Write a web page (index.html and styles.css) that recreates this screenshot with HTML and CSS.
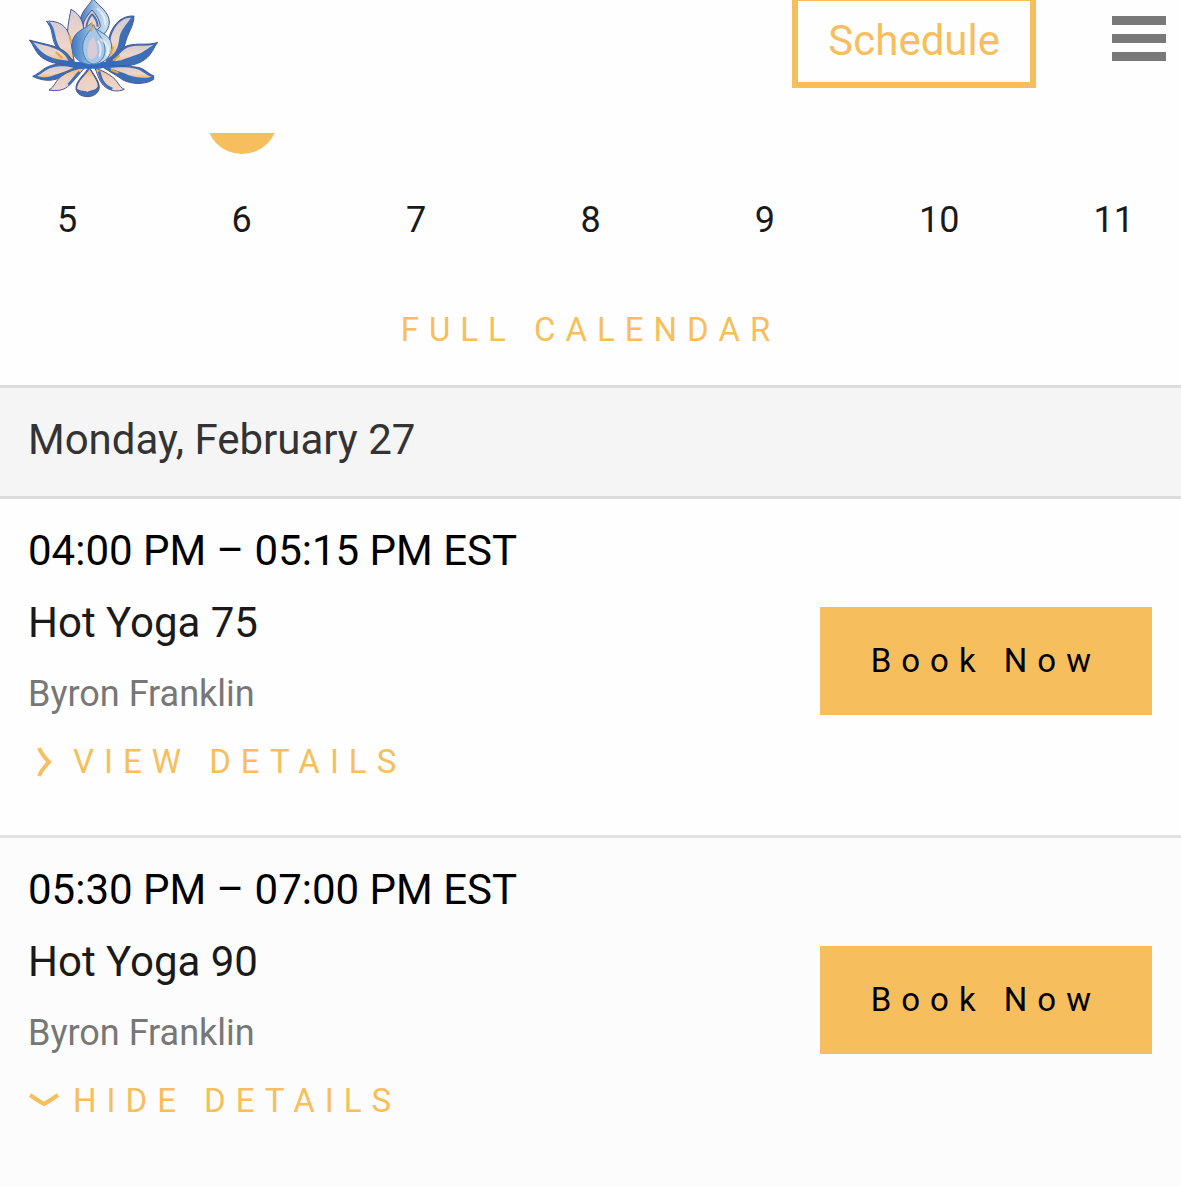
FILE: index.html
```html
<!DOCTYPE html>
<html lang="en">
<head>
  <meta charset="UTF-8">
  <meta name="viewport" content="width=device-width, initial-scale=1.0">
  <title>Class Schedule</title>
  <link rel="stylesheet" href="styles.css">
</head>
<body>
  <!-- Header -->
  <header class="header">
    <a href="#" class="logo" aria-label="Home">
      <svg width="132" height="98" viewBox="43 0 396 294">
        <defs>
          <linearGradient id="petal" x1="0" y1="0" x2="0" y2="1">
            <stop offset="0" stop-color="#d3cbd4"/>
            <stop offset="0.6" stop-color="#efd6c8"/>
            <stop offset="1" stop-color="#f0bd7c"/>
          </linearGradient>
          <linearGradient id="front" x1="0" y1="0" x2="0" y2="1">
            <stop offset="0" stop-color="#f3b45c"/>
            <stop offset="0.4" stop-color="#efd0bc"/>
            <stop offset="1" stop-color="#e9d6d0"/>
          </linearGradient>
          <linearGradient id="bud" x1="0" y1="0" x2="1" y2="0">
            <stop offset="0" stop-color="#3f78c4"/>
            <stop offset="0.5" stop-color="#9dc1e2"/>
            <stop offset="1" stop-color="#d5e5ec"/>
          </linearGradient>
        </defs>
        <g stroke="#4a5590" stroke-width="3" stroke-linejoin="round">
          <!-- back petals -->
          <path fill="url(#bud)" d="M238 -4C222 22 200 36 198 70C198 96 214 112 236 118C262 114 286 96 287 66C286 36 258 20 238 -4Z"/>
          <path fill="url(#petal)" d="M235 30C222 46 208 60 208 82L236 104L260 80C258 60 248 44 235 30Z"/>
          <path fill="none" stroke="#4473b8" stroke-width="6" d="M235 42C226 54 220 66 218 80M235 42C246 54 252 66 252 80"/>
          <path fill="url(#petal)" d="M172 28C166 60 156 96 166 132L184 154L210 84C206 56 192 38 172 28Z"/>
          <path fill="url(#petal)" d="M98 64C118 82 112 108 124 134C136 160 160 178 182 188L172 126C166 92 150 60 98 64Z"/>
          <path fill="none" stroke="#3d6fb9" stroke-width="8" d="M104 68C124 86 116 108 130 136C140 158 160 172 180 184"/>
          <path fill="#3d6fb9" d="M361 48C360 80 342 98 334 132C326 160 308 180 276 194L288 106C300 70 326 46 361 48Z"/>
          <path fill="url(#petal)" stroke="none" d="M352 53C338 76 318 90 316 122C312 150 300 164 284 174L292 110C304 74 326 52 352 53Z"/>
          <!-- side petals -->
          <path fill="#3d6fb9" d="M47 120C62 138 64 156 84 172C110 192 150 194 194 200L172 176C150 136 100 136 47 120Z"/>
          <path fill="url(#petal)" stroke="none" d="M58 127C72 142 78 154 98 165C116 176 140 180 164 182C146 144 104 140 58 127Z"/>
          <path fill="#3d6fb9" d="M432 127C420 142 416 162 394 178C366 200 326 200 270 200C302 176 316 138 354 134C386 130 410 136 432 127Z"/>
          <path fill="url(#petal)" stroke="none" d="M420 134C400 146 388 158 364 166C340 174 324 180 300 190C316 160 330 142 360 138C382 136 400 138 420 134Z"/>
          <path fill="#3d6fb9" d="M57 229C82 218 90 200 122 194C150 190 176 192 206 200C180 216 166 222 142 232C112 246 84 242 57 229Z"/>
          <path fill="url(#petal)" stroke="none" d="M70 228C90 218 98 204 126 200C146 198 164 198 182 202C160 214 142 218 120 226C100 234 88 233 70 228Z"/>
          <path fill="#3d6fb9" d="M420 227C402 222 398 208 372 202C340 196 302 198 262 198C290 216 308 226 328 240C356 254 398 254 420 238Z"/>
          <path fill="url(#petal)" stroke="none" d="M414 230C394 224 388 212 366 206C340 201 318 201 288 204C312 214 328 216 346 226C368 234 392 236 414 230Z"/>
          <!-- front petals -->
          <path fill="url(#front)" d="M106 270C124 260 124 242 144 228C162 214 188 206 214 202C194 226 182 240 168 254C152 272 130 274 106 270Z"/>
          <path fill="url(#front)" d="M332 268C314 260 312 240 292 228C276 216 260 210 244 204C254 230 258 248 276 262C292 274 314 276 332 268Z"/>
          <path fill="none" stroke="#3d6fb9" stroke-width="8" d="M256 214C262 240 270 258 296 267M198 216C184 228 178 242 164 254"/>
          <path fill="#3d6fb9" d="M226 200C216 222 184 242 187 268C190 284 208 290 222 290C238 290 256 280 257 262C256 240 238 222 226 200Z"/>
          <path fill="url(#front)" d="M228 204C216 226 188 244 189 266C198 276 210 272 222 277C234 270 248 274 254 258C252 240 236 222 228 204Z"/>
          <path stroke="none" fill="#3569bd" d="M128 180C158 182 180 186 228 188C270 186 300 186 322 180C304 198 278 202 258 206L228 206L198 206C166 204 144 192 128 180Z"/>
          <!-- bud -->
          <path fill="url(#bud)" stroke="#3d6fb9" d="M232 70C216 88 178 92 175 132C174 164 188 190 228 194C270 196 294 172 294 138C292 98 246 98 232 70Z"/>
          <path fill="#a9c6e4" stroke="#4c7fbd" d="M240 74C228 96 206 112 207 144C208 174 222 190 240 192C264 188 276 168 274 144C270 112 248 100 240 74Z"/>
        </g>
        <path fill="#d9ccd8" d="M238 112C222 126 218 150 224 170C232 184 246 178 250 160C252 140 246 124 238 112Z"/>
        <path fill="none" stroke="#e8a33c" stroke-width="6" stroke-linecap="round" d="M234 70L233 92M128 158L144 172M316 168L300 180M168 108L172 128M298 142L292 160M294 210L312 218"/>
        <path fill="none" stroke="#ffffff" stroke-opacity="0.6" stroke-width="6" stroke-linecap="round" d="M262 118C282 130 286 148 280 166M252 26C268 40 276 52 274 72M254 124C262 138 262 154 258 168"/>
      </svg>
    </a>
    <button class="schedule-button">Schedule</button>
    <button class="menu-button" aria-label="Menu">
      <span class="bar"></span>
      <span class="bar"></span>
      <span class="bar"></span>
    </button>
  </header>

  <!-- Calendar -->
  <section class="calendar">
    <div class="selected-row">
      <div class="selected-day"></div>
    </div>
    <div class="week">
      <span class="day">5</span>
      <span class="day">6</span>
      <span class="day">7</span>
      <span class="day">8</span>
      <span class="day">9</span>
      <span class="day">10</span>
      <span class="day">11</span>
    </div>
    <a href="#" class="full-calendar">FULL CALENDAR</a>
  </section>

  <!-- Classes -->
  <main>
    <h2 class="date">Monday, February 27</h2>

    <article class="class-row">
      <div class="info">
        <div class="time">04:00 PM – 05:15 PM EST</div>
        <h3 class="name">Hot Yoga 75</h3>
        <div class="teacher">Byron Franklin</div>
        <button class="details">
          <svg class="arrow" width="32" height="32" viewBox="0 0 32 32"><path d="M11 2Q14 9 21 16Q14 23 11 30"/></svg>
          VIEW DETAILS
        </button>
      </div>
      <button class="book-button">Book Now</button>
    </article>

    <article class="class-row open">
      <div class="info">
        <div class="time">05:30 PM – 07:00 PM EST</div>
        <h3 class="name">Hot Yoga 90</h3>
        <div class="teacher">Byron Franklin</div>
        <button class="details">
          <svg class="arrow" width="32" height="32" viewBox="0 0 32 32"><path d="M2 10Q9 15 16 19Q23 15 30 10"/></svg>
          HIDE DETAILS
        </button>
      </div>
      <button class="book-button">Book Now</button>
    </article>
  </main>
</body>
</html>
```

FILE: styles.css
```css
body {
  margin: 0;
  font-family: Roboto, sans-serif;
  background-color: #fcfcfc;
  color: #1a1a1a;
  overflow: hidden;
}

button {
  font-family: inherit;
  cursor: pointer;
}

/* Header */
.header {
  display: flex;
  align-items: flex-start;
  height: 133px;
  padding: 0 15px 0 28px;
  box-sizing: border-box;
  background-color: #fefefe;
}

.logo {
  display: flex;
  margin-right: auto;
}

.schedule-button {
  margin: -5px 76px 0 0;
  padding: 15px 30px 17px;
  border: 6px solid #f6be5c;
  background-color: #fefefe;
  color: #f6be5c;
  font-size: 42px;
  line-height: 49px;
}

.menu-button {
  display: flex;
  flex-direction: column;
  gap: 9px;
  margin-top: 16px;
  padding: 0;
  border: none;
  background: none;
}

.bar {
  width: 54px;
  height: 9px;
  background-color: #797979;
}

/* Calendar */
.calendar {
  padding-bottom: 22px;
  background-color: #fefefe;
  text-align: center;
}

.selected-row,
.week {
  display: grid;
  grid-template-columns: repeat(7, 1fr);
  margin: 0 -20px;
}

.selected-row {
  height: 21px;
  overflow: hidden;
  align-content: end;
  justify-items: center;
}

.selected-day {
  grid-column: 2;
  width: 72px;
  height: 72px;
  border-radius: 50%;
  background-color: #f6be5c;
}

.day {
  padding: 30px 0 41px;
  font-size: 36px;
  line-height: 72px;
}

.full-calendar {
  display: block;
  color: #f6be5c;
  font-size: 33px;
  line-height: 66px;
  letter-spacing: 10px;
  text-decoration: none;
}

/* Classes */
.date {
  margin: 0;
  padding: 16px 28px 20px;
  border-top: 3px solid #dcdcdc;
  border-bottom: 3px solid #dcdcdc;
  background-color: #f5f5f5;
  color: #333;
  font-size: 42px;
  font-weight: 400;
  line-height: 72px;
}

.class-row {
  display: flex;
  justify-content: space-between;
  align-items: center;
  padding: 16px 29px 28px 28px;
  border-bottom: 3px solid #e2e2e2;
  background-color: #fefefe;
}

.class-row.open {
  border-bottom: none;
  background-color: #fcfcfc;
}

.info {
  padding-bottom: 12px;
}

.time,
.name {
  margin: 0;
  font-size: 42px;
  font-weight: 400;
  line-height: 72px;
}

.time {
  color: #000;
}

.teacher {
  color: #777;
  font-size: 36px;
  line-height: 70px;
}

.details {
  display: flex;
  align-items: center;
  gap: 13px;
  padding: 0;
  border: none;
  background: none;
  color: #f6be5c;
  font-size: 33px;
  line-height: 66px;
  letter-spacing: 10px;
}

.arrow {
  fill: none;
  stroke: #f6be5c;
  stroke-width: 4;
}

.book-button {
  padding: 21px 51px;
  border: none;
  background-color: #f6be5c;
  color: #000;
  font-size: 33px;
  line-height: 66px;
  letter-spacing: 10px;
}
```
